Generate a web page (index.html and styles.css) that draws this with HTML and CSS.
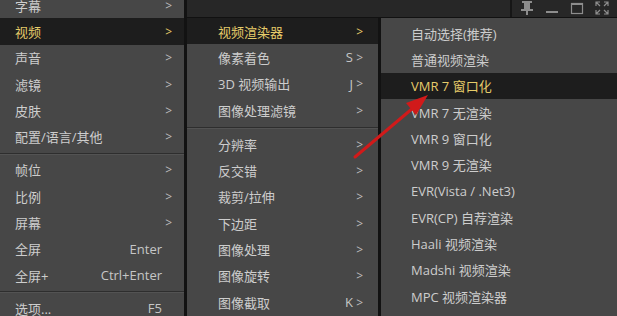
FILE: index.html
```html
<!DOCTYPE html>
<html lang="zh-CN">
<head>
<meta charset="utf-8">
<title>视频菜单</title>
<link rel="stylesheet" href="styles.css">
</head>
<body>
<div class="screen">
  <div class="menu menu-main">
    <div class="list">
      <div class="item"><span class="label">字幕</span><span class="chev">&gt;</span></div>
      <div class="item active"><span class="label">视频</span><span class="chev">&gt;</span></div>
      <div class="item"><span class="label">声音</span><span class="chev">&gt;</span></div>
      <div class="item"><span class="label">滤镜</span><span class="chev">&gt;</span></div>
      <div class="item"><span class="label">皮肤</span><span class="chev">&gt;</span></div>
      <div class="item"><span class="label">配置/语言/其他</span><span class="chev">&gt;</span></div>
      <div class="sep"></div>
      <div class="item"><span class="label">帧位</span><span class="chev">&gt;</span></div>
      <div class="item"><span class="label">比例</span><span class="chev">&gt;</span></div>
      <div class="item"><span class="label">屏幕</span><span class="chev">&gt;</span></div>
      <div class="item"><span class="label">全屏</span><span class="key">Enter</span><span class="chev"></span></div>
      <div class="item"><span class="label">全屏+</span><span class="key">Ctrl+Enter</span><span class="chev"></span></div>
      <div class="sep"></div>
      <div class="item"><span class="label">选项...</span><span class="key">F5</span><span class="chev"></span></div>
    </div>
  </div>
  <div class="side">
    <div class="titlebar">
      <div class="tb-fill"></div>
      <div class="tb-icons">
        <svg class="tb-icon" width="14" height="16" viewBox="0 0 14 16"><rect x="2" y="1" width="10" height="2" fill="#8d8d8d"/><rect x="4" y="3" width="6" height="6" fill="#8d8d8d"/><rect x="1" y="9" width="12" height="2" fill="#8d8d8d"/><rect x="6" y="11" width="2" height="4" fill="#8d8d8d"/></svg>
        <svg class="tb-icon" width="14" height="16" viewBox="0 0 14 16"><rect x="1" y="11" width="12" height="2" fill="#8d8d8d"/></svg>
        <svg class="tb-icon" width="14" height="16" viewBox="0 0 14 16"><rect x="1.5" y="3.5" width="11" height="10" fill="none" stroke="#8d8d8d" stroke-width="1.2"/><rect x="1" y="3" width="12" height="2" fill="#8d8d8d"/></svg>
        <svg class="tb-icon" width="14" height="16" viewBox="0 0 14 16" fill="none" stroke="#8d8d8d" stroke-width="1.2"><path d="M1 6V2h4M1 2l4 4M9 2h4v4M13 2l-4 4M1 10v4h4M1 14l4-4M13 10v4H9M13 14l-4-4"/></svg>
      </div>
    </div>
    <div class="submenus">
      <div class="menu menu-video">
        <div class="item active"><span class="label">视频渲染器</span><span class="chev">&gt;</span></div>
        <div class="item"><span class="label">像素着色</span><span class="key">S</span><span class="chev">&gt;</span></div>
        <div class="item"><span class="label">3D 视频输出</span><span class="key">J</span><span class="chev">&gt;</span></div>
        <div class="item"><span class="label">图像处理滤镜</span><span class="chev">&gt;</span></div>
        <div class="sep"></div>
        <div class="item"><span class="label">分辨率</span><span class="chev">&gt;</span></div>
        <div class="item"><span class="label">反交错</span><span class="chev">&gt;</span></div>
        <div class="item"><span class="label">裁剪/拉伸</span><span class="chev">&gt;</span></div>
        <div class="item"><span class="label">下边距</span><span class="chev">&gt;</span></div>
        <div class="item"><span class="label">图像处理</span><span class="chev">&gt;</span></div>
        <div class="item"><span class="label">图像旋转</span><span class="chev">&gt;</span></div>
        <div class="item"><span class="label">图像截取</span><span class="key">K</span><span class="chev">&gt;</span></div>
      </div>
      <div class="menu menu-render">
        <div class="item"><span class="label">自动选择(推荐)</span></div>
        <div class="item"><span class="label">普通视频渲染</span></div>
        <div class="item active"><span class="label">VMR 7 窗口化</span></div>
        <div class="item"><span class="label">VMR 7 无渲染</span></div>
        <div class="item"><span class="label">VMR 9 窗口化</span></div>
        <div class="item"><span class="label">VMR 9 无渲染</span></div>
        <div class="item"><span class="label">EVR(Vista / .Net3)</span></div>
        <div class="item"><span class="label">EVR(CP) 自荐渲染</span></div>
        <div class="item"><span class="label">Haali 视频渲染</span></div>
        <div class="item"><span class="label">Madshi 视频渲染</span></div>
        <div class="item"><span class="label">MPC 视频渲染器</span></div>
      </div>
    </div>
  </div>
  <svg class="arrow" width="617" height="316" viewBox="0 0 617 316">
    <line x1="355" y1="157" x2="413" y2="108" stroke="#d11a1a" stroke-width="3" stroke-linecap="round"/>
    <polygon points="428,95 416,115 406,103" fill="#d11a1a"/>
  </svg>
</div>
</body>
</html>
```

FILE: styles.css
```css
body {
  margin: 0;
  width: 617px;
  height: 316px;
  overflow: hidden;
  background: #282828;
  font-family: "Open Sans", "Noto Sans CJK SC", sans-serif;
  font-size: 13px;
}

.screen {
  position: relative;
  display: flex;
  width: 617px;
  height: 316px;
  overflow: hidden;
}

.menu {
  background: #474747;
  color: #cdcdcd;
}

.menu-main {
  width: 184px;
  flex: none;
  border-right: 3px solid #121212;
}

.menu-main .list {
  margin-top: -8px;
}

.side {
  flex: 1;
  display: flex;
  flex-direction: column;
  min-width: 0;
}

.titlebar {
  height: 17px;
  flex: none;
  display: flex;
  background: #272727;
  border-bottom: 1px solid #111;
}

.tb-fill {
  flex: 1;
  border-right: 2px solid #161616;
}

.tb-icons {
  width: 97px;
  display: flex;
  align-items: flex-start;
  gap: 11px;
  padding-left: 8px;
}

.tb-icon {
  display: block;
}

.submenus {
  flex: 1;
  display: flex;
}

.menu-video {
  width: 191px;
  flex: none;
  border-right: 3px solid #121212;
}

.menu-render {
  flex: 1;
  padding-top: 2px;
}

.item {
  height: 26.3px;
  display: flex;
  align-items: center;
  white-space: nowrap;
  padding: 0 12px 0 15px;
}

.menu-video .item {
  padding: 0 15px 0 31px;
}

.menu-render .item {
  padding: 0 10px 0 30px;
}

.item.active {
  background: #1d1d1d;
  color: #e6cc6a;
}

.label {
  flex: 1;
}

.key {
  color: #c6c6c6;
}

.chev {
  width: 10px;
  text-align: right;
  font-size: 12px;
  color: #bdbdbd;
}

.item.active .chev {
  color: #e6cc6a;
}

.sep {
  height: 7px;
  display: flex;
  align-items: center;
}

.menu-video .sep {
  height: 8px;
}

.sep::before {
  content: "";
  flex: 1;
  height: 1px;
  background: #2e2e2e;
  box-shadow: 0 1px 0 #535353;
}

.arrow {
  position: absolute;
  left: 0;
  top: 0;
  pointer-events: none;
}
```
